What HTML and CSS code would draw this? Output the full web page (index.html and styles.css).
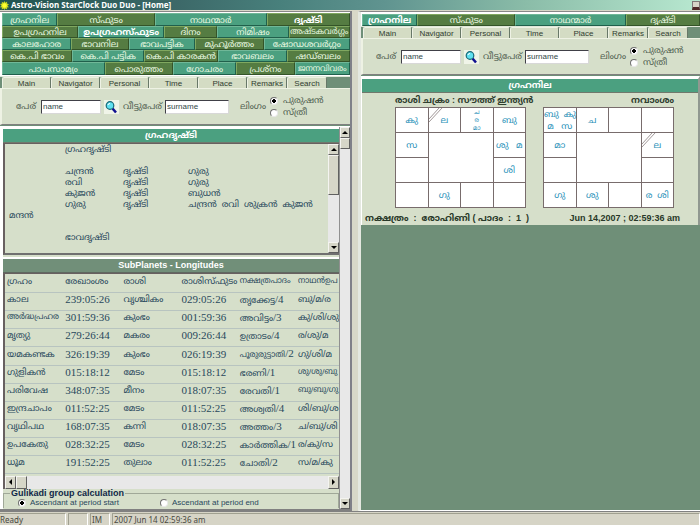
FILE: index.html
```html
<!DOCTYPE html>
<html lang="ml">
<head>
<meta charset="utf-8">
<title>Astro-Vision StarClock Duo Duo - [Home]</title>
<link rel="stylesheet" href="styles.css">
</head>
<body>
<header class="titlebar">
  <svg class="sun" viewBox="0 0 10 10" aria-hidden="true"><path d="M5 0l1 2 2-1.400-.3 2.200L10 3.500 8.300 5 10 7l-2.300.1L8 9.500 6 8.200 5 10 4 8.200 1.800 9.500l.4-2.300L0 7l1.600-2L0 3.400l2.300-.5L1.900.7 4 2z" fill="#c8d820"/><circle cx="5" cy="5" r="2.500" fill="#ffff30"/></svg>
  <h1>Astro-Vision StarClock Duo Duo - [Home]</h1>
  <button class="minimize" aria-label="Minimize"></button>
</header>
<main class="workspace">
  <section class="pane pane-left">
    <nav class="tabs">
      <div class="tabrow r1"><button class="t">ഗ്രഹനില</button><button class="g">സ്ഫുടം</button><button class="t">നാഥന്മാർ</button><button class="g on">ദൃഷ്ടി</button></div>
      <div class="tabrow r2"><button class="g">ഉപഗ്രഹനില</button><button class="t on">ഉപഗ്രഹസ്ഫുടം</button><button class="g">ദിനം</button><button class="t">നിമിഷം</button><button class="g compact">അഷ്ടകവർഗ്ഗം</button></div>
      <div class="tabrow r3"><button class="t">കാലഹോര</button><button class="g">ഭാവനില</button><button class="t">ഭാവപട്ടിക</button><button class="g">മുഹൂർത്തം</button><button class="t">ഷോഡശവർഗ്ഗം</button></div>
      <div class="tabrow r4"><button class="g">കെ.പി ഭാവം</button><button class="t">കെ.പി പട്ടിക</button><button class="g">കെ.പി കാരകൻ</button><button class="t">ഭാവബലം</button><button class="g">ഷഡ്ബലം</button></div>
      <div class="tabrow r5"><button class="t">പാപസാമ്യം</button><button class="g">പൊരുത്തം</button><button class="t">ഗോചരം</button><button class="g">പ്രശ്നം</button><button class="t compact">ജനനവിവരം</button></div>
    </nav>
    <div class="subtabs"><button>Main</button><button>Navigator</button><button>Personal</button><button>Time</button><button class="up">Place</button><button class="small">Remarks</button><button class="small">Search</button></div>
    <form class="person">
      <label for="n1">പേര്</label><input class="text" id="n1" type="text" value="name">
      <button type="button" class="find" aria-label="Search"><svg viewBox="0 0 14 14"><path d="M8.500 8.500l3.500 4" stroke="#101090" stroke-width="2.500"/><circle cx="6" cy="5.500" r="3.800" fill="#60e0f0" stroke="#186878" stroke-width="1.200"/><path d="M4 5a2 2 0 0 1 2-1.500" stroke="#fff" fill="none"/></svg></button>
      <label for="s1">വീട്ടുപേര്</label><input class="text surname" id="s1" type="text" value="surname">
      <span class="sex">ലിംഗം</span>
      <div class="radios"><label><input type="radio" name="sex1" checked>പുരുഷൻ</label><label><input type="radio" name="sex1">സ്ത്രീ</label></div>
    </form>
    <div class="results">
      <div class="column">
        <section class="block">
          <h2 class="teal">ഗ്രഹദൃഷ്ടി</h2>
          <div class="report">
            <table class="aspects">
              <tr><td></td><td colspan="3">ഗ്രഹദൃഷ്ടി</td></tr>
              <tr><td colspan="4"></td></tr>
              <tr><td></td><td>ചന്ദ്രൻ</td><td>ദൃഷ്ടി</td><td>ഗുരു</td></tr>
              <tr><td></td><td>രവി</td><td>ദൃഷ്ടി</td><td>ഗുരു</td></tr>
              <tr><td></td><td>കുജൻ</td><td>ദൃഷ്ടി</td><td>ബുധൻ</td></tr>
              <tr><td></td><td>ഗുരു</td><td>ദൃഷ്ടി</td><td>ചന്ദ്രൻ&nbsp; രവി&nbsp; ശുക്രൻ&nbsp; കുജൻ</td></tr>
              <tr><td>മന്ദൻ</td><td colspan="3"></td></tr>
              <tr><td colspan="4"></td></tr>
              <tr><td></td><td colspan="3">ഭാവദൃഷ്ടി</td></tr>
            </table>
            <div class="vscroll"><button class="arrow up-arrow" aria-label="Up"></button><div class="thumb tall"></div><button class="arrow down-arrow" aria-label="Down"></button></div>
          </div>
        </section>
        <section class="block second">
          <h2 class="sage">SubPlanets - Longitudes</h2>
          <div class="gridbox">
            <table class="planets">
              <thead><tr><th>ഗ്രഹം</th><th>രേഖാംശം</th><th>രാശി</th><th>രാശിസ്ഫുടം</th><th class="compact">നക്ഷത്രപാദം</th><th class="compact">നാഥൻഉപ</th></tr></thead>
              <tbody>
              <tr><td>കാല</td><td class="n">239:05:26</td><td>വൃശ്ചികം</td><td class="n">029:05:26</td><td>തൃക്കേട്ട<b>/4</b></td><td>ബു/മ/ര</td></tr>
              <tr><td class="compact">അർദ്ധപ്രഹര</td><td class="n">301:59:36</td><td>കുംഭം</td><td class="n">001:59:36</td><td>അവിട്ടം<b>/3</b></td><td>കു/ശി/ശു</td></tr>
              <tr><td>മൃത്യു</td><td class="n">279:26:44</td><td>മകരം</td><td class="n">009:26:44</td><td>ഉത്രാടം<b>/4</b></td><td>ര/ശു/മ</td></tr>
              <tr><td>യമകണ്ടക</td><td class="n">326:19:39</td><td>കുംഭം</td><td class="n">026:19:39</td><td class="compact">പൂരുരുട്ടാതി<b>/2</b></td><td>ഗു/ശി/മ</td></tr>
              <tr><td>ഗുളികൻ</td><td class="n">015:18:12</td><td>മേടം</td><td class="n">015:18:12</td><td>ഭരണി<b>/1</b></td><td class="compact">ശു/ശു/ബു</td></tr>
              <tr><td>പരിവേഷ</td><td class="n">348:07:35</td><td>മീനം</td><td class="n">018:07:35</td><td>രേവതി<b>/1</b></td><td class="compact">ബു/ബു/ഗു</td></tr>
              <tr><td>ഇന്ദ്രചാപം</td><td class="n">011:52:25</td><td>മേടം</td><td class="n">011:52:25</td><td>അശ്വതി<b>/4</b></td><td>ശി/ബു/ശ</td></tr>
              <tr><td>വൃഥിപഥ</td><td class="n">168:07:35</td><td>കന്നി</td><td class="n">018:07:35</td><td>അത്തം<b>/3</b></td><td>ച/ബു/ശി</td></tr>
              <tr><td>ഉപകേതു</td><td class="n">028:32:25</td><td>മേടം</td><td class="n">028:32:25</td><td>കാർത്തിക<b>/1</b></td><td>ര/കു/സ</td></tr>
              <tr><td>ധൂമ</td><td class="n">191:52:25</td><td>തുലാം</td><td class="n">011:52:25</td><td>ചോതി<b>/2</b></td><td>സ/മ/കു</td></tr>
              </tbody>
            </table>
            <div class="hscroll"><button class="arrow left-arrow" aria-label="Left"></button><div class="thumb"></div><button class="arrow right-arrow" aria-label="Right"></button></div>
          </div>
        </section>
        <fieldset class="gulika"><legend>Gulikadi group calculation</legend>
          <label><input type="radio" name="gul" checked>Ascendant at period start</label>
          <label><input type="radio" name="gul">Ascendant at period end</label>
        </fieldset>
      </div>
      <div class="vscroll main-scroll"><button class="arrow up-arrow" aria-label="Up"></button><div class="thumb"></div><button class="arrow down-arrow" aria-label="Down"></button></div>
    </div>
  </section>
  <section class="pane pane-right">
    <nav class="tabs">
      <div class="tabrow q1"><button class="t on">ഗ്രഹനില</button><button class="g">സ്ഫുടം</button><button class="t">നാഥന്മാർ</button><button class="g">ദൃഷ്ടി</button></div>
    </nav>
    <div class="subtabs"><button>Main</button><button>Navigator</button><button>Personal</button><button>Time</button><button class="up">Place</button><button class="small">Remarks</button><button class="small">Search</button></div>
    <form class="person">
      <label for="n2">പേര്</label><input class="text" id="n2" type="text" value="name">
      <button type="button" class="find" aria-label="Search"><svg viewBox="0 0 14 14"><path d="M8.500 8.500l3.500 4" stroke="#101090" stroke-width="2.500"/><circle cx="6" cy="5.500" r="3.800" fill="#60e0f0" stroke="#186878" stroke-width="1.200"/><path d="M4 5a2 2 0 0 1 2-1.500" stroke="#fff" fill="none"/></svg></button>
      <label for="s2">വീട്ടുപേര്</label><input class="text surname" id="s2" type="text" value="surname">
      <span class="sex">ലിംഗം</span>
      <div class="radios"><label><input type="radio" name="sex2" checked>പുരുഷൻ</label><label><input type="radio" name="sex2">സ്ത്രീ</label></div>
    </form>
    <section class="block charts">
      <h2 class="teal">ഗ്രഹനില</h2>
      <div class="chart-area">
        <div class="chart-row">
          <figure>
            <figcaption>രാശി ചക്രം : സൗത്ത് ഇന്ത്യൻ</figcaption>
            <table class="chart">
              <tr><td>കു</td><td class="lagna"><svg viewBox="0 0 14 14" aria-hidden="true"><path d="M0 11L10 0M0 14L13 0"/></svg>ല</td><td class="tiny">ച<br>ര<br>മാ</td><td>ബു</td></tr>
              <tr><td>സ</td><td colspan="2" rowspan="2"></td><td>ശു&nbsp; &nbsp;മ</td></tr>
              <tr><td></td><td>ശി</td></tr>
              <tr><td></td><td>ഗു</td><td></td><td></td></tr>
            </table>
          </figure>
          <figure>
            <figcaption class="end">നവാംശം</figcaption>
            <table class="chart">
              <tr><td>ബു&nbsp; കു<br>മ&nbsp; &nbsp;സ</td><td>ച</td><td></td><td></td></tr>
              <tr><td>മാ</td><td colspan="2" rowspan="2"></td><td class="lagna"><svg viewBox="0 0 14 14" aria-hidden="true"><path d="M0 11L10 0M0 14L13 0"/></svg>ല</td></tr>
              <tr><td></td><td></td></tr>
              <tr><td>ഗു</td><td>ശു</td><td></td><td>ര&nbsp; ശി</td></tr>
            </table>
          </figure>
        </div>
        <p class="foot"><span>നക്ഷത്രം&nbsp; :&nbsp; രോഹിണി ( പാദം&nbsp; :&nbsp; 1&nbsp; )</span><time>Jun 14,2007 ; 02:59:36 am</time></p>
      </div>
    </section>
  </section>
</main>
<footer class="status"><span class="ready">Ready</span><span class="blank"></span><span class="im">IM</span><span class="clock">2007 Jun 14 02:59:36 am</span></footer>
</body>
</html>
```
FILE: styles.css
```css
* { box-sizing: border-box; }
body { margin: 0; height: 100vh; display: flex; flex-direction: column; background: #d8d8c8; color: #28485c; font: 9px/11px "Liberation Sans", "Noto Sans Malayalam", sans-serif; overflow: hidden; }
button, input { font: inherit; color: inherit; margin: 0; padding: 0; border: 0; border-radius: 0; }
h1, h2, p, figure { margin: 0; }
table { border-collapse: collapse; border-spacing: 0; }
td, th { padding: 0; text-align: left; font-weight: normal; }

.titlebar { display: flex; align-items: center; height: 10px; flex: none; background: linear-gradient(90deg, #205450, #3c6868 25%, #48807c 40%, #609490 55%, #8abca8 75%, #b8e8d0); overflow: hidden; }
.sun { width: 9px; height: 9px; margin-right: 2px; }
.titlebar h1 { flex: 1; color: #fff; font: bold 8px/10px "Noto Sans", sans-serif; white-space: nowrap; }
.minimize { width: 8px; height: 9px; background: #d8d4c8; border: 1px solid #807878; border-bottom: 3px solid #502828; }

.workspace { flex: 1; min-height: 0; display: grid; grid-template-columns: 352fr 342fr; column-gap: 6px; padding-top: 1px; }
.pane { display: flex; flex-direction: column; min-width: 0; min-height: 0; background: #6f8f78; border-top: 1px solid #888; overflow: hidden; }
.pane-left { border-right: 2px solid #808088; border-bottom: 2px solid #808080; }
.pane-right { border-left: 3px solid #e4e8e0; border-bottom: 1px solid #fff; }

.tabs { background: #fff; padding: 1px 0 1px 2px; }
.tabrow { display: grid; height: 12px; }
.r1 { grid-template-columns: 55fr 97fr 111fr 83fr; height: 13px; }
.r2 { grid-template-columns: 76fr 85fr 53fr 71fr 61fr; }
.r3 { grid-template-columns: 69fr 57fr 66fr 68fr 86fr; }
.r4 { grid-template-columns: 70fr 71fr 74fr 68fr 63fr; }
.r5 { grid-template-columns: 102fr 68fr 63fr 58fr 55fr; height: 13px; }
.q1 { grid-template-columns: 55fr 98fr 110fr 74fr; }
.pane-right .tabs { padding: 2px 0 0 1px; }
.tabrow button { min-width: 0; overflow: hidden; white-space: nowrap; color: #e8f8e0; line-height: 10px; border: 1px solid; }
.tabrow .t { background: #4ba080; border-color: #70b898 #20604c #20604c #70b898; }
.tabrow .g { background: #557c42; border-color: #80a860 #345428 #345428 #80a860; }
.tabrow .on { color: #fff; font-weight: bold; }
.tabrow .compact, .planets .compact { font-size: 8px; }

.subtabs { display: flex; align-items: flex-end; height: 12px; padding-left: 2px; flex: none; border-top: 1px solid #e0e8d8; }
.subtabs button { width: 49px; height: 11px; flex: none; background: #d4dcc4; color: #303c30; font-size: 8px; line-height: 9px; border: 1px solid #eef2e4; border-right-color: #687868; border-bottom: 0; border-radius: 2px 2px 0 0; }
.subtabs .small { width: 40px; }

.person { display: flex; align-items: center; flex: none; height: 37px; padding-left: 14px; background: #d6dfca; border-top: 1px solid #eef2e4; border-left: 2px solid #eef2e4; border-bottom: 1px solid #808080; color: #506050; white-space: nowrap; }
.person > label:first-child { width: 25px; }
.pane-right .person { padding-left: 13px; }
.text { width: 60px; height: 14px; padding-left: 1px; background: #fff; color: #304848; border: 1px solid #d8d8d8; border-top-color: #404048; border-left-color: #404048; font-size: 8px; }
.surname { width: 64px; }
.find { width: 15px; height: 14px; margin: 0 4px 0 3px; background: #f0f4e8; }
.find svg { display: block; width: 14px; height: 14px; }
.find + label { width: 42px; flex: none; }
.sex { margin-left: 11px; width: 30px; }
.radios { display: flex; flex-direction: column; }
.radios label { display: flex; align-items: center; gap: 5px; height: 12px; }
input[type=radio] { appearance: none; width: 8px; height: 8px; border-radius: 50%; border: 1px solid #707070; border-right-color: #e8e8e8; border-bottom-color: #e8e8e8; background: #fff; }
input[type=radio]:checked { background: radial-gradient(circle, #000 0 2px, #fff 2px); }

.results { display: flex; flex: 1; min-height: 0; margin-top: 1px; border-top: 1px solid #fff; }
.column { flex: 1; min-width: 0; background: #d6dfca; border-left: 3px solid #fff; }
.block { border-top: 2px solid #fff; }
h2 { height: 14px; text-align: center; color: #fff; font-weight: bold; font-size: 9px; line-height: 13px; }
.teal { background: #4ba080; border-bottom: 1px solid #70786c; }
.sage { background: #718f79; border-bottom: 1px solid #606860; }
.report { display: flex; height: 112px; border: 1px solid #686060; border-right: 0; border-left-width: 2px; border-bottom: 2px solid #707070; }
.aspects { flex: 1; width: 0; align-self: flex-start; }
.aspects td { height: 11px; line-height: 11px; white-space: nowrap; }
.aspects td:first-child { padding-left: 4px; }
.aspects tr { display: grid; grid-template-columns: 60px 58px 65px 1fr; }
.aspects td[colspan="4"] { grid-column: span 4; }
.vscroll { display: flex; flex-direction: column; width: 11px; flex: none; background: #e8e8e8; }
.hscroll { display: flex; height: 13px; background: #e8e8e8; }
.arrow, .thumb { width: 11px; height: 11px; flex: none; background: #d6d6c8; border: 1px solid #f4f4f0; border-right-color: #606060; border-bottom-color: #606060; display: flex; align-items: center; justify-content: center; }
.main-scroll .arrow, .main-scroll .thumb { width: 10px; }
.arrow::before { content: ""; border: 3px solid transparent; }
.up-arrow::before { border-top: 0; border-bottom-color: #000; }
.down-arrow::before { border-bottom: 0; border-top-color: #000; }
.left-arrow::before { border-left: 0; border-right-color: #000; }
.right-arrow::before { border-right: 0; border-left-color: #000; }
.down-arrow { margin-top: auto; }
.right-arrow { margin-left: auto; }
.hscroll .arrow, .hscroll .thumb { height: 13px; }
.vscroll .tall { height: 40px; }
.main-scroll { border-left: 1px solid #909090; }

.second { margin-top: 2px; }
.gridbox { border: 1px solid #686060; border-right: 0; border-left-width: 2px; border-bottom: 0; overflow: hidden; }
.planets { width: 100%; table-layout: fixed; margin-bottom: 2px; }
.planets tr { height: 18px; border-bottom: 1px solid #b8c4c0; }
.planets td, .planets th { padding: 0 0 4px 2px; white-space: nowrap; overflow: hidden; line-height: 12px; }
.planets th:last-child, .planets td:last-child { width: 43px; }
.planets .n, .planets b { font: 11px/12px "Liberation Serif", serif; }
.gulika { display: flex; margin: 0; padding: 0 0 0 14px; border: 1px solid #a0a898; border-bottom: 0; min-width: 0; }
.gulika legend { margin-left: -8px; padding: 0 1px; color: #102848; font-weight: bold; line-height: 9px; }
.gulika label { display: flex; align-items: center; gap: 4px; width: 142px; font-size: 8px; line-height: 10px; white-space: nowrap; }

.charts { margin: 1px 0 0; border-top: 3px solid #fff; border-left: 1px solid #fff; border-right: 2px solid #909890; }
.chart-area { background: #d6dfca; padding: 1px 0 0; }
.chart-row { display: flex; gap: 17px; padding-left: 33px; }
figure { width: 131px; }
figcaption { height: 13px; line-height: 13px; font-weight: bold; color: #304030; white-space: nowrap; }
.end { text-align: right; }
.chart { width: 100%; table-layout: fixed; color: #2890b8; }
.chart td { height: 25px; border: 1px solid #786c6c; background: #fff; text-align: center; white-space: nowrap; line-height: 12px; }
.chart .tiny { font-size: 6px; line-height: 8px; }
.chart .lagna { position: relative; }
.lagna svg { position: absolute; left: 0; top: 0; width: 14px; height: 14px; fill: none; stroke: #786c6c; stroke-width: .7; }
.foot { display: flex; justify-content: space-between; padding: 4px 18px 1px 3px; color: #283828; font-weight: bold; line-height: 12px; white-space: nowrap; }

.status { display: flex; height: 14px; flex: none; border-top: 1px solid #808080; background: #d6d4c6; color: #484840; padding-top: 1px; gap: 2px; font: 8px/12px "Noto Sans", sans-serif; white-space: nowrap; }
.status span { border: 1px solid #a0a090; border-right-color: #fff; border-bottom: 0; padding-left: 1px; overflow: hidden; }
.ready { width: 68px; margin-left: -2px; }
.blank { width: 20px; }
.im { width: 20px; }
.clock { flex: 1; }
```
